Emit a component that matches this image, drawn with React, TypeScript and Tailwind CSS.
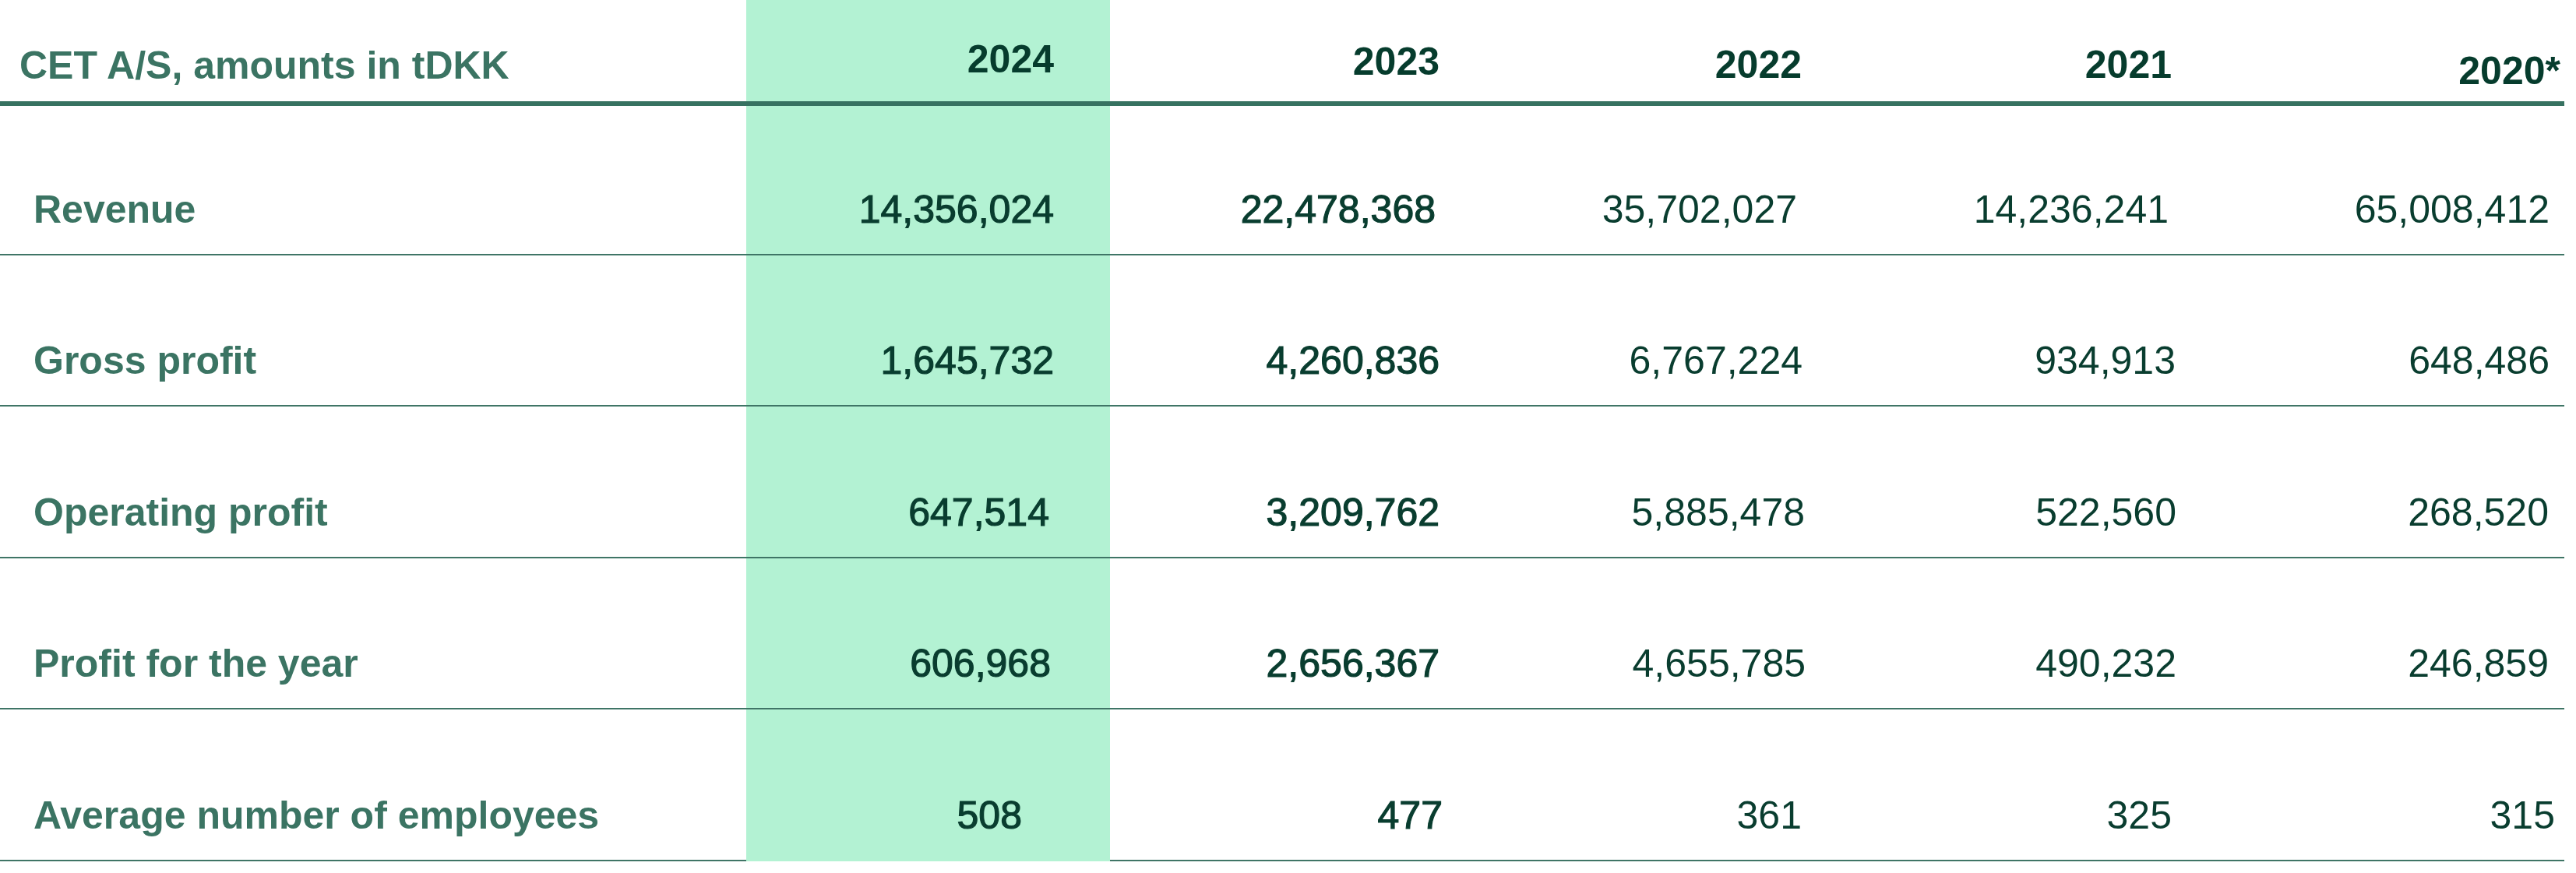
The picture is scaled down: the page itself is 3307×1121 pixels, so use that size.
import React from "react"

// Key figures table: CET A/S, five years, 2024 highlighted
type Row = {
  label: string
  values: string[]
  // small per-cell nudges so figures sit where the source put them
  nudge: string[]
  height: string
}

const years = [
  { label: "2024", cls: "pb-[29px] pr-[72px] bg-[#b3f2d3]" },
  { label: "2023", cls: "pb-[26px]" },
  { label: "2022", cls: "pb-[22px]" },
  { label: "2021", cls: "pb-[22px]" },
  { label: "2020*", cls: "pb-[14px] pr-[5px]" },
]

const rows: Row[] = [
  {
    label: "Revenue",
    values: ["14,356,024", "22,478,368", "35,702,027", "14,236,241", "65,008,412"],
    nudge: ["", "mr-[5px]", "mr-[6px]", "mr-[4px]", ""],
    height: "h-[192px]",
  },
  {
    label: "Gross profit",
    values: ["1,645,732", "4,260,836", "6,767,224", "934,913", "648,486"],
    nudge: ["", "", "-mr-[1px]", "-mr-[5px]", ""],
    height: "h-[194px]",
  },
  {
    label: "Operating profit",
    values: ["647,514", "3,209,762", "5,885,478", "522,560", "268,520"],
    nudge: ["mr-[6px]", "", "-mr-[4px]", "-mr-[6px]", "mr-[1px]"],
    height: "h-[195px]",
  },
  {
    label: "Profit for the year",
    values: ["606,968", "2,656,367", "4,655,785", "490,232", "246,859"],
    nudge: ["mr-[4px]", "", "-mr-[5px]", "-mr-[6px]", "mr-[1px]"],
    height: "h-[194px]",
  },
  {
    label: "Average number of employees",
    values: ["508", "477", "361", "325", "315"],
    nudge: ["mr-[41px]", "-mr-[4px]", "", "", "-mr-[7px]"],
    height: "h-[195px]",
  },
]

const colPad = ["pr-[72px]", "", "", "", "pr-[19px]"]

export default function App() {
  return (
    <div className="w-[3307px] h-[1121px] bg-white overflow-hidden font-['Liberation_Sans',Arial,sans-serif] text-[50px] leading-none">
      <div className="w-[3292px]">
        {/* header */}
        <div className="grid grid-cols-[958px_467px_423px_465px_475px_504px] h-[136px]">
          <div className="flex items-end pl-[25px] pb-[21px] border-b-[6px] border-[#377261] font-bold text-[#3b7463]">
            CET A/S, amounts in tDKK
          </div>
          {years.map((y) => (
            <div
              key={y.label}
              className={`flex items-end justify-end border-b-[6px] border-[#377261] font-bold text-[#063c2d] ${y.cls}`}
            >
              {y.label}
            </div>
          ))}
        </div>

        {/* body */}
        {rows.map((row, ri) => {
          const last = ri === rows.length - 1
          return (
            <div
              key={row.label}
              className={`grid grid-cols-[958px_467px_423px_465px_475px_504px] ${row.height}`}
            >
              <div className="flex items-end pl-[43px] pb-[32px] border-b-2 border-[#3f7566] font-bold text-[#3b7463]">
                {row.label}
              </div>
              {row.values.map((v, ci) => (
                <div
                  key={ci}
                  className={`flex items-end justify-end pb-[32px] border-b-2 text-[#093d2f] ${colPad[ci]} ${
                    ci === 0 ? "bg-[#b3f2d3]" : ""
                  } ${ci === 0 && last ? "border-[#b3f2d3]" : "border-[#3f7566]"} ${
                    ci < 2 ? "[-webkit-text-stroke-width:1.2px]" : ""
                  }`}
                >
                  <span className={row.nudge[ci]}>{v}</span>
                </div>
              ))}
            </div>
          )
        })}
      </div>
    </div>
  )
}
